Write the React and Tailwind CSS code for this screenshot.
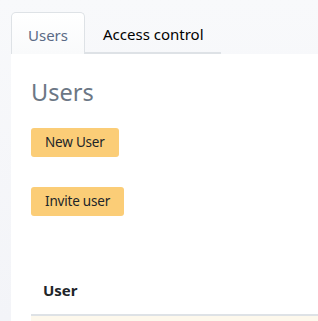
export default function App() {
  const font = { fontFamily: '"Noto Sans", "Open Sans", sans-serif' };
  return (
    <div className="w-[318px] h-[321px] overflow-hidden bg-gradient-to-b from-[#f8f9fb] to-[#f3f4f8] pl-[11px] pt-[12px]" style={font}>
      <div className="flex items-end">
        <div className="h-[42px] pl-[16px] pr-[16px] pt-[4px] flex items-center border border-b-0 border-[#dee2e6] rounded-t-[5px] bg-gradient-to-b from-[#ffffff] to-[#f9fafb] text-[15px] text-[#5a6a85]">
          Users
        </div>
        <div className="h-[42px] pl-[18px] pr-[17px] pt-[4px] flex items-center border-b-2 border-[#dee2e6] text-[15px] text-[#000]">
          Access control
        </div>
      </div>
      <div className="bg-white pl-[20px] pt-[24px] h-[300px]">
        <div className="text-[23.5px] leading-[28px] text-[#6c7785]">Users</div>
        <div className="mt-[22px]">
          <button className="h-[29px] px-[14px] rounded-[3px] bg-[#fbcd77] text-[13.5px] tracking-[-0.2px] text-[#212529]">New User</button>
        </div>
        <div className="mt-[30px]">
          <button className="h-[29px] px-[14px] rounded-[3px] bg-[#fbcd77] text-[13.5px] tracking-[-0.2px] text-[#212529]">Invite user</button>
        </div>
        <div className="mt-[64px] pl-[12px] pb-[14px] leading-[20px] font-bold text-[15px] text-[#212529]">User</div>
        <div className="h-[2px] bg-[#dee2e6]"></div>
        <div className="h-[20px] bg-[#fdf8ec]"></div>
      </div>
    </div>
  );
}
